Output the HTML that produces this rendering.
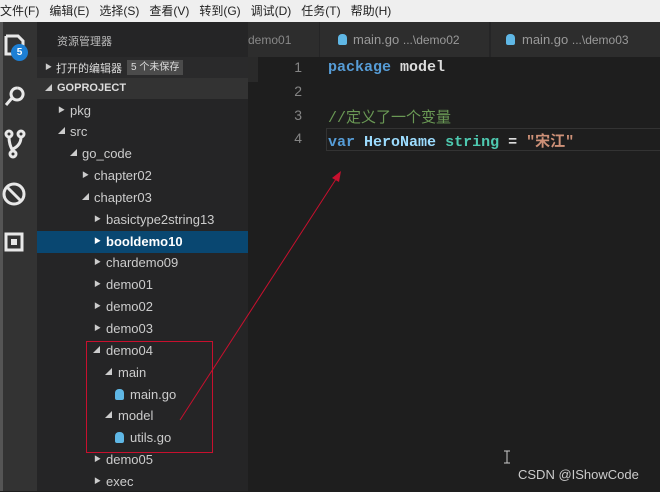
<!DOCTYPE html>
<html><head><meta charset="utf-8"><style>
*{margin:0;padding:0;box-sizing:border-box}
body{width:660px;height:491px;overflow:hidden;background:#1e1e1e;position:relative;font-family:"Liberation Sans","Noto Sans CJK SC",sans-serif}
.a{position:absolute;white-space:nowrap}
#menu{left:0;top:0;width:660px;height:22px;background:#efefef;font-size:12px;color:#222;line-height:22px}
#act{left:0;top:22px;width:37px;height:469px;background:#333}
#side{left:37px;top:22px;width:211px;height:469px;background:#252526}
.r{position:absolute;font-size:13px;color:#ccc;line-height:21px;height:21px}
.d{position:absolute;font-size:7px;color:#ccc;line-height:21px;height:21px}
.code{font-family:"Liberation Mono","Noto Sans CJK SC",monospace;font-size:15px;font-weight:bold}
.ln{position:absolute;left:270px;width:32px;text-align:right;color:#858585;font-size:14px;font-family:"Liberation Sans",sans-serif}
.gi{position:absolute;width:9px;height:11px;background:#5fb7e5;border-radius:4px 4px 2px 2px}
</style></head><body>
<div class="a" id="menu"><span>文件(F)&nbsp;&nbsp;&nbsp;编辑(E)&nbsp;&nbsp;&nbsp;选择(S)&nbsp;&nbsp;&nbsp;查看(V)&nbsp;&nbsp;&nbsp;转到(G)&nbsp;&nbsp;&nbsp;调试(D)&nbsp;&nbsp;&nbsp;任务(T)&nbsp;&nbsp;&nbsp;帮助(H)</span></div>
<div class="a" id="act"></div>
<div class="a" style="left:0;top:22px;width:3px;height:469px;background:#555"></div>
<svg class="a" style="left:0;top:26px" width="37" height="240" viewBox="0 0 37 240" fill="none" stroke="#e8e8e8" stroke-width="3">
<path d="M6 10 h12 l5 5 v14 M6 10 v18 h10"/>
<path d="M17 62 a6 6 0 1 0 0.1 0 M12 72 l-6 7" />
<circle cx="9" cy="108" r="3"/><circle cx="21" cy="108" r="3"/><circle cx="13" cy="128" r="3"/><path d="M9 111 q0 8 4 14 M21 111 q0 8 -8 12"/>
<circle cx="14" cy="168" r="10"/><path d="M7 161 l14 14"/>
<rect x="6" y="208" width="16" height="16"/><rect x="11" y="213" width="6" height="6" fill="#e8e8e8" stroke="none"/>
</svg>
<div class="a" style="left:11px;top:44px;width:17px;height:17px;border-radius:50%;background:#1d7fd4;color:#fff;font-size:10px;text-align:center;line-height:17px;font-weight:bold">5</div>
<div class="a" id="side"></div>
<div class="a" style="left:57px;top:33px;font-size:11px;color:#bbb">资源管理器</div>
<div class="a" style="left:37px;top:57px;width:211px;height:21px;background:#2a2a2b"></div>
<div class="d" style="left:45px;top:57px">▶</div>
<div class="a" style="left:56px;top:60px;font-size:11px;color:#ddd">打开的编辑器</div>
<div class="a" style="left:127px;top:60px;font-size:10px;color:#ddd;background:#4b4b4b;padding:0 4px;line-height:15px">5 个未保存</div>
<div class="a" style="left:37px;top:78px;width:211px;height:21px;background:#333"></div>
<div class="d" style="left:45px;top:78px">◢</div>
<div class="a" style="left:57px;top:82px;font-size:11px;color:#ddd;font-weight:bold">GOPROJECT</div>
<div class="a" style="left:37px;top:231px;width:211px;height:22px;background:#094771"></div>
<div class="d" style="left:58px;top:100px">▶</div><div class="r" style="left:70px;top:100px">pkg</div>
<div class="d" style="left:58px;top:121px">◢</div><div class="r" style="left:70px;top:121px">src</div>
<div class="d" style="left:70px;top:143px">◢</div><div class="r" style="left:82px;top:143px">go_code</div>
<div class="d" style="left:82px;top:165px">▶</div><div class="r" style="left:94px;top:165px">chapter02</div>
<div class="d" style="left:82px;top:187px">◢</div><div class="r" style="left:94px;top:187px">chapter03</div>
<div class="d" style="left:94px;top:209px">▶</div><div class="r" style="left:106px;top:209px">basictype2string13</div>
<div class="d" style="left:94px;top:231px;color:#fff">▶</div><div class="r" style="left:106px;top:231px;color:#fff;font-weight:bold">booldemo10</div>
<div class="d" style="left:94px;top:252px">▶</div><div class="r" style="left:106px;top:252px">chardemo09</div>
<div class="d" style="left:94px;top:274px">▶</div><div class="r" style="left:106px;top:274px">demo01</div>
<div class="d" style="left:94px;top:296px">▶</div><div class="r" style="left:106px;top:296px">demo02</div>
<div class="d" style="left:94px;top:318px">▶</div><div class="r" style="left:106px;top:318px">demo03</div>
<div class="d" style="left:93px;top:340px">◢</div><div class="r" style="left:106px;top:340px">demo04</div>
<div class="d" style="left:105px;top:362px">◢</div><div class="r" style="left:118px;top:362px">main</div>
<div class="gi" style="left:115px;top:389px"></div><div class="r" style="left:130px;top:384px">main.go</div>
<div class="d" style="left:105px;top:405px">◢</div><div class="r" style="left:118px;top:405px">model</div>
<div class="gi" style="left:115px;top:432px"></div><div class="r" style="left:130px;top:427px">utils.go</div>
<div class="d" style="left:94px;top:449px">▶</div><div class="r" style="left:106px;top:449px">demo05</div>
<div class="d" style="left:94px;top:471px">▶</div><div class="r" style="left:106px;top:471px">exec</div>
<div class="a" style="left:86px;top:341px;width:127px;height:112px;border:1px solid #c8102e"></div>
<div class="a" style="left:248px;top:22px;width:412px;height:35px;background:#252526"></div>
<div class="a" style="left:248px;top:22px;width:72px;height:35px;background:#2d2d2d;border-right:1px solid #252526"></div>
<div class="a" style="left:248px;top:33px;font-size:12px;color:#888">demo01</div>
<div class="a" style="left:320px;top:22px;width:170px;height:35px;background:#2d2d2d;border-right:1px solid #252526"></div>
<div class="gi" style="left:338px;top:34px"></div>
<div class="a" style="left:353px;top:32px;font-size:13px;color:#999">main.go <span style="font-size:12px">...\demo02</span></div>
<div class="a" style="left:491px;top:22px;width:169px;height:35px;background:#2d2d2d"></div>
<div class="gi" style="left:506px;top:34px"></div>
<div class="a" style="left:522px;top:32px;font-size:13px;color:#999">main.go <span style="font-size:12px">...\demo03</span></div>
<div class="a" style="left:248px;top:57px;width:10px;height:25px;background:#2a2a2a"></div>
<div class="a" style="left:326px;top:128px;width:334px;height:23px;border:1px solid #333;border-right:none"></div>
<div class="ln" style="top:59px">1</div><div class="ln" style="top:83px">2</div><div class="ln" style="top:107px">3</div><div class="ln" style="top:130px">4</div>
<div class="a code" style="left:328px;top:59px"><span style="color:#569cd6">package</span> <span style="color:#ddd">model</span></div>
<div class="a code" style="left:328px;top:106px;color:#6a9955;font-weight:normal">//定义了一个变量</div>
<div class="a code" style="left:328px;top:130px"><span style="color:#569cd6">var</span> <span style="color:#9cdcfe">HeroName</span> <span style="color:#4ec9b0">string</span> <span style="color:#ddd">=</span> <span style="color:#ce9178">"宋江"</span></div>
<svg class="a" style="left:0;top:0" width="660" height="491">
<line x1="180" y1="420" x2="338" y2="176" stroke="#c8102e" stroke-width="1"/>
<path d="M341 171 l-2 11 l-7 -4z" fill="#c8102e"/>
<path d="M504 451 h6 M507 451 v12 M504 463 h6" stroke="#ccc" stroke-width="1"/>
</svg>
<div class="a" style="left:518px;top:467px;font-size:13px;color:#ccc">CSDN @IShowCode</div>
</body></html>
